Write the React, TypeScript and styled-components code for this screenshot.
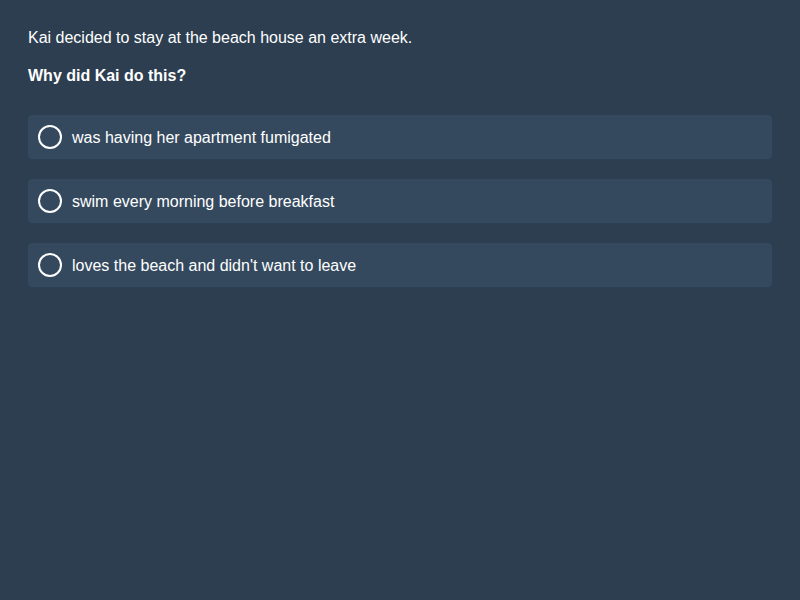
import React from "react";
import styled, { createGlobalStyle } from "styled-components";

const Global = createGlobalStyle`
  html, body { margin: 0; padding: 0; background: #2c3e50; }
  body { font-family: "Liberation Sans", Arial, sans-serif; color: #ffffff; }
`;

const Page = styled.div`
  min-height: 600px;
  box-sizing: border-box;
  padding: 29px 28px 28px;
  background: #2c3e50;
`;

const Context = styled.p`
  margin: 0;
  font-size: 16px;
  line-height: 18px;
`;

const Question = styled.p`
  margin: 20px 0 0;
  font-size: 16px;
  line-height: 18px;
  font-weight: bold;
`;

const Options = styled.div`
  margin-top: 30px;
  display: flex;
  flex-direction: column;
  gap: 20px;
`;

const Option = styled.label`
  display: flex;
  align-items: center;
  gap: 10px;
  height: 44px;
  box-sizing: border-box;
  padding: 0 10px;
  background: #34495e;
  border-radius: 4px;
  font-size: 16px;
  cursor: pointer;
`;

const Radio = styled.span`
  width: 24px;
  height: 24px;
  box-sizing: border-box;
  border: 2px solid #ffffff;
  border-radius: 50%;
  flex: none;
`;

const Label = styled.span`
  line-height: 18px;
  padding-top: 2px;
`;

const answers = [
  "was having her apartment fumigated",
  "swim every morning before breakfast",
  "loves the beach and didn't want to leave",
];

export default function App() {
  return (
    <>
      <Global />
      <Page>
        <Context>Kai decided to stay at the beach house an extra week.</Context>
        <Question>Why did Kai do this?</Question>
        <Options>
          {answers.map((a) => (
            <Option key={a}>
              <Radio />
              <Label>{a}</Label>
            </Option>
          ))}
        </Options>
      </Page>
    </>
  );
}
